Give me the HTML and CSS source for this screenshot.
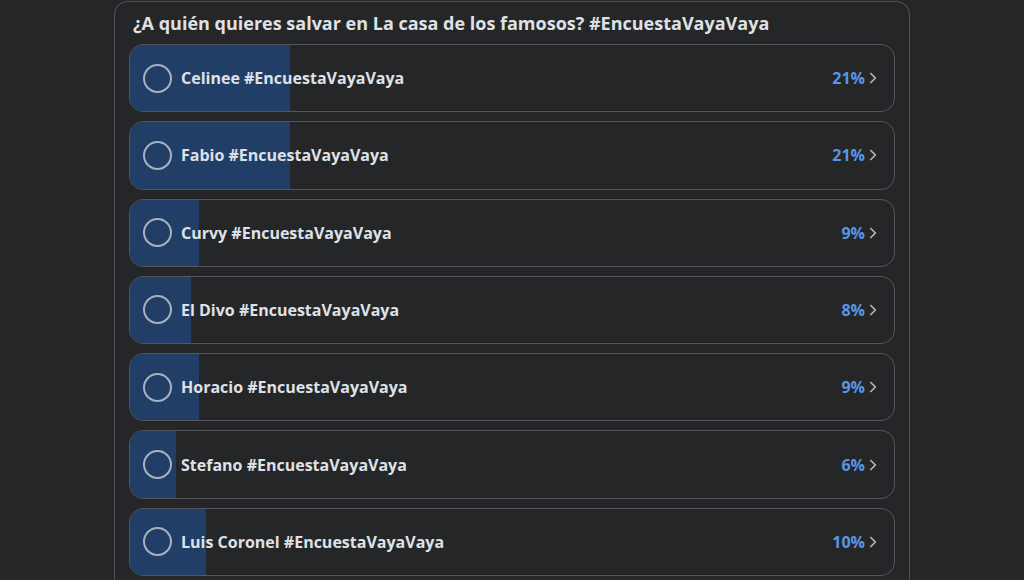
FILE: index.html
```html
<!DOCTYPE html>
<html lang="es">
<head>
    <meta charset="UTF-8">
    <meta name="viewport" content="width=device-width, initial-scale=1.0">
    <title>Encuesta</title>
    <link rel="stylesheet" href="styles.css">
</head>
<body>
    <svg class="symbols" aria-hidden="true">
        <symbol id="chevron" viewBox="0 0 8 14">
            <path d="M1.3 2 L6.3 7 L1.3 12" fill="none" stroke="currentColor" stroke-width="1.7"/>
        </symbol>
    </svg>
    <form class="poll">
        <h1 class="question">¿A quién quieres salvar en La casa de los famosos? #EncuestaVayaVaya</h1>
        <div class="options">
            <div class="option">
                <div class="fill" style="width:21%"></div>
                <label class="choice"><input class="radio" type="radio" name="vote">Celinee #EncuestaVayaVaya</label>
                <button class="votes" type="button">21%<svg class="chevron"><use href="#chevron"/></svg></button>
            </div>
            <div class="option">
                <div class="fill" style="width:21%"></div>
                <label class="choice"><input class="radio" type="radio" name="vote">Fabio #EncuestaVayaVaya</label>
                <button class="votes" type="button">21%<svg class="chevron"><use href="#chevron"/></svg></button>
            </div>
            <div class="option">
                <div class="fill" style="width:9%"></div>
                <label class="choice"><input class="radio" type="radio" name="vote">Curvy #EncuestaVayaVaya</label>
                <button class="votes" type="button">9%<svg class="chevron"><use href="#chevron"/></svg></button>
            </div>
            <div class="option">
                <div class="fill" style="width:8%"></div>
                <label class="choice"><input class="radio" type="radio" name="vote">El Divo #EncuestaVayaVaya</label>
                <button class="votes" type="button">8%<svg class="chevron"><use href="#chevron"/></svg></button>
            </div>
            <div class="option">
                <div class="fill" style="width:9%"></div>
                <label class="choice"><input class="radio" type="radio" name="vote">Horacio #EncuestaVayaVaya</label>
                <button class="votes" type="button">9%<svg class="chevron"><use href="#chevron"/></svg></button>
            </div>
            <div class="option">
                <div class="fill" style="width:6%"></div>
                <label class="choice"><input class="radio" type="radio" name="vote">Stefano #EncuestaVayaVaya</label>
                <button class="votes" type="button">6%<svg class="chevron"><use href="#chevron"/></svg></button>
            </div>
            <div class="option">
                <div class="fill" style="width:10%"></div>
                <label class="choice"><input class="radio" type="radio" name="vote">Luis Coronel #EncuestaVayaVaya</label>
                <button class="votes" type="button">10%<svg class="chevron"><use href="#chevron"/></svg></button>
            </div>
        </div>
    </form>
</body>
</html>
```
FILE: styles.css
```css
*{
    box-sizing: border-box;
}
body{
    margin: 0;
    padding: 1px 16px 0;
    min-height: 100vh;
    display: flex;
    justify-content: center;
    background-color: #252628;
    color: #dfe1e6;
    font-family: "Open Sans", "Noto Sans", sans-serif;
    font-weight: 700;
}
.symbols{
    display: none;
}
.poll{
    flex: 1;
    max-width: 796px;
    display: flex;
    flex-direction: column;
    padding: 0 14px 4px;
    border: 1px solid #515255;
    border-bottom: none;
    border-radius: 14px 14px 0 0;
}
.question{
    margin: 0;
    padding: 7px 4px;
    font-size: 18px;
    line-height: 28px;
    font-weight: 700;
}
.options{
    flex: 1;
    display: grid;
    grid-auto-rows: 1fr;
    gap: 9px;
}
.option{
    position: relative;
    display: flex;
    align-items: center;
    min-height: 68px;
    padding: 0 17px 0 13px;
    border: 1px solid #55565a;
    border-radius: 14px;
    overflow: hidden;
}
.fill{
    position: absolute;
    top: 0;
    bottom: 0;
    left: 0;
    background-color: #213f66;
}
.choice{
    position: relative;
    flex: 1;
    display: flex;
    align-items: center;
    gap: 9px;
    font-size: 16px;
    line-height: 24px;
    cursor: pointer;
}
.radio{
    appearance: none;
    flex: none;
    width: 29px;
    height: 29px;
    margin: 0;
    border: 2px solid #a9b1bf;
    border-radius: 50%;
}
.radio:checked{
    border: 8px solid #5a96e6;
}
.votes{
    position: relative;
    display: flex;
    align-items: center;
    gap: 4px;
    padding: 0;
    border: none;
    background-color: transparent;
    color: #5a96e6;
    font-family: inherit;
    font-size: 16px;
    font-weight: 700;
    line-height: 24px;
    cursor: pointer;
}
.chevron{
    width: 8px;
    height: 14px;
    color: #b0b3b8;
}
```
